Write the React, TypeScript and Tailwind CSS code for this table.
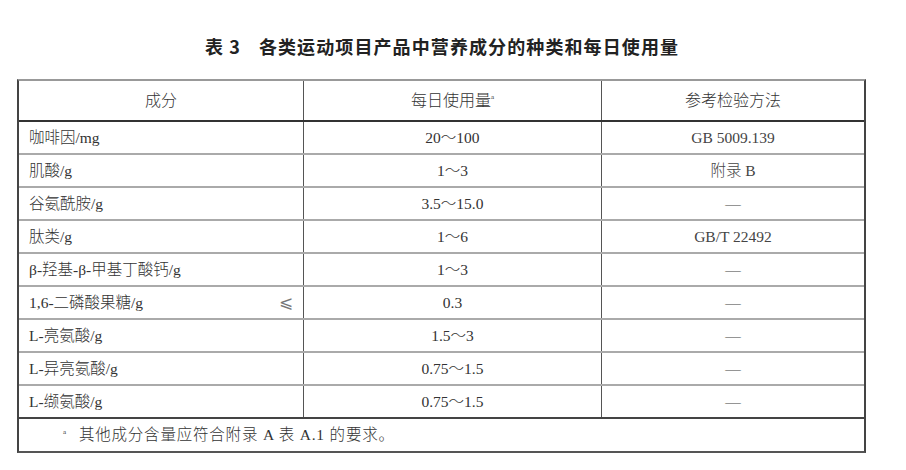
import React from "react";

const rows: [string, string, string, boolean?][] = [
  ["咖啡因/mg", "20～100", "GB 5009.139"],
  ["肌酸/g", "1～3", "附录 B"],
  ["谷氨酰胺/g", "3.5～15.0", "—"],
  ["肽类/g", "1～6", "GB/T 22492"],
  ["β-羟基-β-甲基丁酸钙/g", "1～3", "—"],
  ["1,6-二磷酸果糖/g", "0.3", "—", true],
  ["L-亮氨酸/g", "1.5～3", "—"],
  ["L-异亮氨酸/g", "0.75～1.5", "—"],
  ["L-缬氨酸/g", "0.75～1.5", "—"],
];

export default function App() {
  return (
    <div
      className="w-[906px] h-[470px] bg-white text-[#333]"
      style={{ fontFamily: '"Liberation Serif", "Noto Sans CJK SC", serif' }}
    >
      <div className="h-[79px] flex items-center justify-center pt-[14px] pr-[22px]">
        <h1
          className="text-[18px] font-bold text-[#222] tracking-[1.1px]"
          style={{ fontFamily: '"Noto Sans CJK SC", sans-serif' }}
        >
          表 3<span className="inline-block w-[18px]" />各类运动项目产品中营养成分的种类和每日使用量
        </h1>
      </div>
      <div className="ml-[17px] w-[849px] border-x-2 border-t-2 border-b-2 border-l-[#444] border-r-[#444] border-t-[#999] border-b-[#555]">
        <div className="grid grid-cols-[284px_298px_1fr] h-[41px] border-b-2 border-[#333] text-[16px] font-light">
          <div className="flex items-center justify-center">成分</div>
          <div className="flex items-center justify-center border-l border-[#555]">
            每日使用量<sup className="text-[7px] relative -top-[4px]">a</sup>
          </div>
          <div className="flex items-center justify-center border-l border-[#555]">参考检验方法</div>
        </div>
        {rows.map(([a, b, c, le], i) => (
          <div
            key={i}
            className={
              "grid grid-cols-[284px_298px_1fr] h-[33px] text-[15.5px] font-light border-b-2 " +
              (i === rows.length - 1 ? "border-[#444]" : "border-[#aaa]")
            }
          >
            <div className="flex items-center justify-between pl-[10px] pr-[10px]">
              <span>{a}</span>
              {le ? <span className="text-[#777] text-[17px]">⩽</span> : null}
            </div>
            <div className="flex items-center justify-center border-l border-[#555]">{b}</div>
            <div className="flex items-center justify-center border-l border-[#555] text-[#444]">{c}</div>
          </div>
        ))}
        <div className="h-[32px] flex items-center pl-[44px] text-[15.5px] font-light tracking-[0.8px]">
          <sup className="text-[7px] relative -top-[3px] mr-[12px]">a</sup>
          <span>其他成分含量应符合附录 A 表 A.1 的要求。</span>
        </div>
      </div>
    </div>
  );
}
